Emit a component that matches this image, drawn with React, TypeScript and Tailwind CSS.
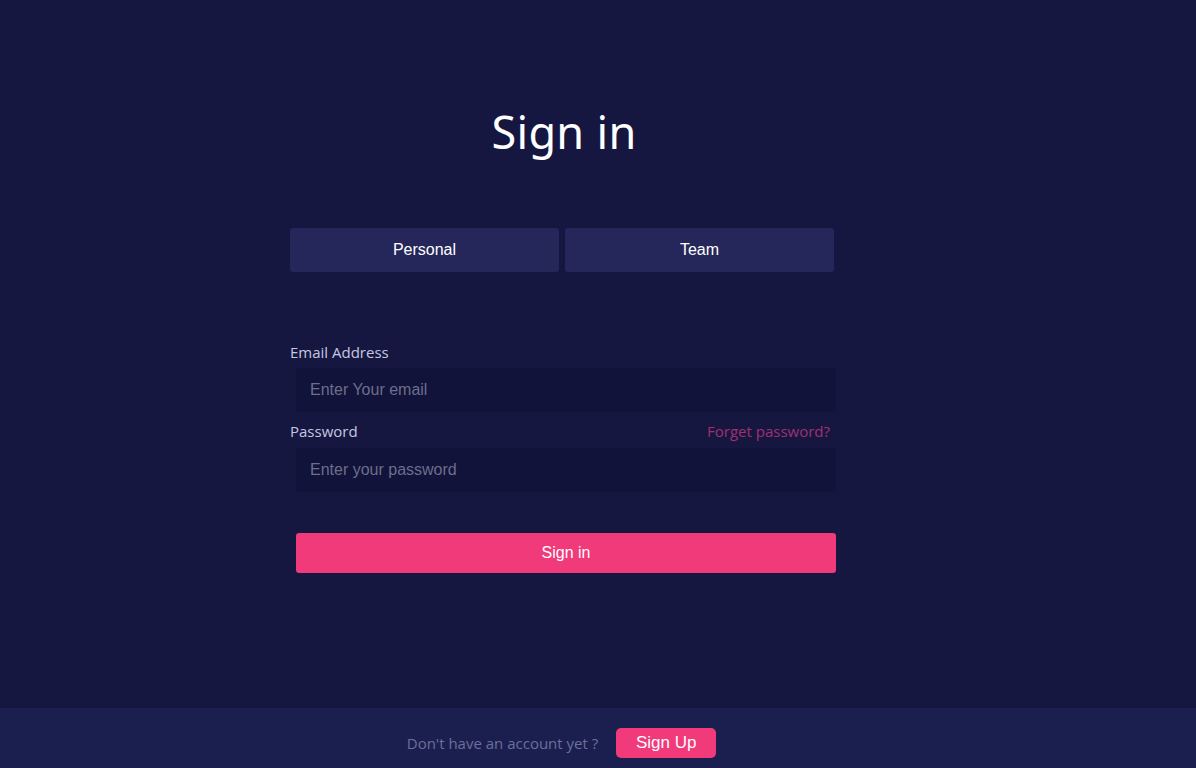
import React from 'react';

const App: React.FC = () => {
  return (
    <div className="min-h-screen bg-[#151741] flex flex-col font-['Open_Sans',sans-serif]">
      <main className="flex-1 h-[708px] flex flex-col items-center pr-[70px]">
        <h1 className="mt-[100px] ml-[2px] text-[45px] leading-[64px] text-white font-['Noto_Sans',sans-serif] tracking-[0.3px]">
          Sign in
        </h1>

        <div className="mt-[64px] w-[544px] -ml-[2px] flex gap-[6px] font-['Liberation_Sans',Arial,sans-serif]">
          <button className="flex-1 h-[44px] rounded-[3px] bg-[#25275a] text-white text-[16px]">Personal</button>
          <button className="flex-1 h-[44px] rounded-[3px] bg-[#25275a] text-white text-[16px]">Team</button>
        </div>

        <form className="mt-[70px] w-[546px] flex flex-col">
          <label className="text-[15px] leading-[20px] text-[#c5c7e0]">Email Address</label>
          <input
            className="mt-[6px] ml-[6px] h-[44px] bg-[#11133a] px-[14px] text-[16px] text-white placeholder-[#6c6e8c] outline-none font-['Liberation_Sans',Arial,sans-serif]"
            placeholder="Enter Your email"
          />
          <div className="mt-[9px] flex justify-between items-center pr-[6px]">
            <label className="text-[15px] leading-[20px] text-[#c5c7e0]">Password</label>
            <a className="text-[15px] leading-[20px] text-[#a2306f]">Forget password?</a>
          </div>
          <input
            type="password"
            className="mt-[7px] ml-[6px] h-[44px] bg-[#11133a] px-[14px] text-[16px] text-white placeholder-[#6c6e8c] outline-none font-['Liberation_Sans',Arial,sans-serif]"
            placeholder="Enter your password"
          />
          <button
            type="button"
            className="mt-[41px] ml-[6px] h-[40px] rounded-[3px] bg-[#f13a7a] text-white text-[16px] font-['Liberation_Sans',Arial,sans-serif]"
          >
            Sign in
          </button>
        </form>
      </main>

      <footer className="h-[60px] bg-[#1b1f4f] flex items-start justify-center gap-[18px] pr-[73px] pt-[20px]">
        <span className="text-[15px] leading-[30px] text-[#6b6f99]">Don't have an account yet ?</span>
        <button className="w-[100px] h-[30px] rounded-[5px] bg-[#f13a7a] text-white text-[17px] font-['Liberation_Sans',Arial,sans-serif]">
          Sign Up
        </button>
      </footer>
    </div>
  );
};

export default App;
